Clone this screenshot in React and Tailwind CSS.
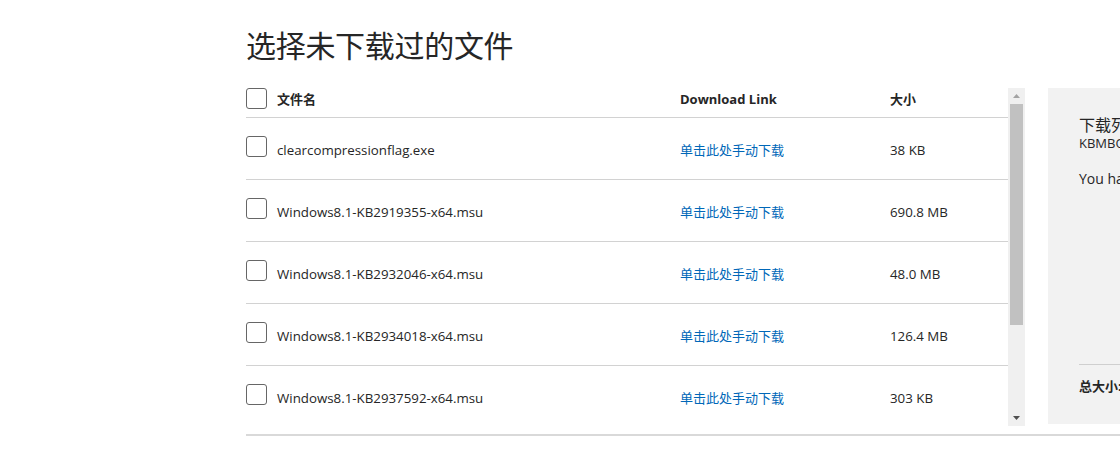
import React from 'react';

const files = [
  { name: 'clearcompressionflag.exe', size: '38 KB' },
  { name: 'Windows8.1-KB2919355-x64.msu', size: '690.8 MB' },
  { name: 'Windows8.1-KB2932046-x64.msu', size: '48.0 MB' },
  { name: 'Windows8.1-KB2934018-x64.msu', size: '126.4 MB' },
  { name: 'Windows8.1-KB2937592-x64.msu', size: '303 KB' },
];

const Checkbox = ({ className = '' }) => (
  <span className={`block w-[21px] h-[21px] border border-[#666] rounded-[3px] bg-white shrink-0 ${className}`} />
);

const Scrollbar = () => (
  <div className="w-[17px] h-full bg-[#f0f0f0] flex flex-col items-center shrink-0">
    <div className="h-[16px] w-full flex items-center justify-center">
      <svg width="7" height="4" viewBox="0 0 7 4"><path d="M0 4L3.5 0L7 4Z" fill="#a3a3a3" /></svg>
    </div>
    <div className="w-[13px] h-[221px] bg-[#c1c1c1]" />
    <div className="flex-1" />
    <div className="h-[17px] w-full flex items-center justify-center">
      <svg width="7" height="4" viewBox="0 0 7 4"><path d="M0 0L7 0L3.5 4Z" fill="#505050" /></svg>
    </div>
  </div>
);

export default function App() {
  return (
    <div
      className="w-[1120px] h-[464px] overflow-hidden bg-white text-[#262626]"
      style={{ fontFamily: '"Segoe UI", "Open Sans", "Noto Sans CJK SC", sans-serif' }}
    >
      <div className="pl-[246px] pt-[24px]">
        <h1 className="text-[30px] leading-[44px] font-normal text-[#262626] tracking-[-0.3px]">
          选择未下载过的文件
        </h1>

        <div className="mt-[20px] flex">
          <div className="w-[779px] shrink-0">
            {/* file table + scrollbar */}
            <div className="flex h-[338px]">
              <div className="w-[762px] overflow-hidden">
                <div className="flex items-center h-[30px] border-b border-[#d2d2d2] pb-[8px] text-[13px] font-bold">
                  <Checkbox />
                  <span className="ml-[10px] w-[403px] pt-[3px]">文件名</span>
                  <span className="w-[210px] pt-[3px]">Download Link</span>
                  <span className="pt-[3px]">大小</span>
                </div>
                {files.map((f) => (
                  <div key={f.name} className="flex items-center h-[62px] border-b border-[#d2d2d2] text-[13.3px]">
                    <Checkbox className="mb-[5px]" />
                    <span className="ml-[10px] w-[403px] pt-[4px]">{f.name}</span>
                    <span className="w-[210px] pt-[4px] text-[13px] text-[#0067b8]">单击此处手动下载</span>
                    <span className="pt-[4px]">{f.size}</span>
                  </div>
                ))}
              </div>
              <Scrollbar />
            </div>
          </div>

          {/* download list panel */}
          <div className="ml-[23px] w-[320px] h-[336px] bg-[#f2f2f2] shrink-0 px-[31px] pt-[27px] flex flex-col">
            <div className="text-[16px] leading-[20px]">下载列表</div>
            <div className="text-[13px] leading-[16px]">KBMBOX</div>
            <div className="mt-[18px] text-[14px] leading-[20px]">You have not selected any files.</div>
            <div className="flex-1" />
            <div className="border-t border-[#cfcfcf] pt-[12px] pb-[28px] text-[13px] font-bold">总大小: 0 KB</div>
          </div>
        </div>
        <div className="mt-[8px] border-t-2 border-[#d9d9d9]" />
      </div>
    </div>
  );
}
